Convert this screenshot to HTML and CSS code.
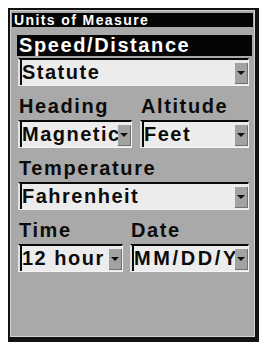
FILE: index.html
```html
<!DOCTYPE html>
<html>
<head>
<meta charset="utf-8">
<link rel="stylesheet" href="styles.css">
</head>
<body>
<div class="frame">
  <div class="inner">
    <div class="title">Units of Measure</div>
    <div class="section">Speed/Distance</div>
    <div class="select full"><span class="val">Statute</span><span class="btn"><span class="tri"></span></span></div>
    <div class="row row-a">
      <div class="field">
        <div class="label">Heading</div>
        <div class="select"><span class="val">Magnetic</span><span class="btn"><span class="tri"></span></span></div>
      </div>
      <div class="field">
        <div class="label">Altitude</div>
        <div class="select"><span class="val">Feet</span><span class="btn"><span class="tri"></span></span></div>
      </div>
    </div>
    <div class="field single">
      <div class="label">Temperature</div>
      <div class="select"><span class="val">Fahrenheit</span><span class="btn"><span class="tri"></span></span></div>
    </div>
    <div class="row row-b">
      <div class="field">
        <div class="label">Time</div>
        <div class="select"><span class="val">12 hour</span><span class="btn"><span class="tri"></span></span></div>
      </div>
      <div class="field">
        <div class="label">Date</div>
        <div class="select"><span class="val wide">MM/DD/YY</span><span class="btn"><span class="tri"></span></span></div>
      </div>
    </div>
  </div>
</div>
</body>
</html>
```
FILE: styles.css
```css
html, body {
  margin: 0;
  padding: 0;
  background: #ffffff;
}
body {
  font-family: "Liberation Sans", Arial, sans-serif;
  font-weight: bold;
  color: #0c0c0c;
}
.frame {
  margin: 8px 0 0 8px;
  width: 251px;
  height: 334px;
  box-sizing: border-box;
  background: #121212;
  padding: 2px 4px 5px 2px;
}
.inner {
  height: 100%;
  box-sizing: border-box;
  border: 1px solid #d2d2d2;
  background: #a9a9a9;
  padding-top: 2px;
  display: flex;
  flex-direction: column;
}
.title {
  margin: 0 1px;
  height: 14px;
  line-height: 15px;
  background: #050505;
  color: #ffffff;
  font-size: 14px;
  letter-spacing: 1.4px;
  padding-left: 2px;
  white-space: nowrap;
  overflow: hidden;
}
.section {
  margin: 8px 2px 0 6px;
  height: 21px;
  line-height: 21px;
  background: #050505;
  color: #ffffff;
  font-size: 20px;
  letter-spacing: 1.6px;
  padding-left: 2px;
  white-space: nowrap;
}
.select {
  display: flex;
  height: 28px;
  box-sizing: border-box;
  background: #ececec;
  border-left: 2px solid #e2e2e2;
  border-top: 2px solid #0a0a0a;
  border-right: 1px solid #f4f4f4;
  border-bottom: 1px solid #f4f4f4;
  box-shadow: inset 2px 0 0 #0a0a0a;
  font-size: 20px;
  letter-spacing: 1.5px;
  line-height: 25px;
}
.select.full {
  margin: 2px 5px 0 7px;
}
.val {
  flex: 1;
  min-width: 0;
  overflow: hidden;
  white-space: nowrap;
  padding-left: 2px;
}
.val.wide {
  letter-spacing: 2.6px;
}
.btn {
  flex: none;
  width: 13px;
  margin: 3px 0 1px 0;
  box-sizing: border-box;
  background: #a2a2a2;
  border-right: 1px solid #707070;
  border-bottom: 1px solid #707070;
  display: flex;
  align-items: center;
  justify-content: center;
}
.tri {
  width: 0;
  height: 0;
  border-left: 4px solid transparent;
  border-right: 4px solid transparent;
  border-top: 4px solid #111111;
}
.row {
  display: grid;
  margin-left: 7px;
}
.row-a {
  grid-template-columns: 114px 109px;
  column-gap: 8px;
}
.row-b {
  grid-template-columns: 105px 119px;
  column-gap: 7px;
}
.field.single {
  margin: 0 5px 0 7px;
}
.label {
  margin-top: 10px;
  padding-left: 1px;
  height: 20px;
  line-height: 20px;
  font-size: 20px;
  letter-spacing: 1.6px;
  white-space: nowrap;
}
.field .select {
  margin-top: 4px;
}
```
